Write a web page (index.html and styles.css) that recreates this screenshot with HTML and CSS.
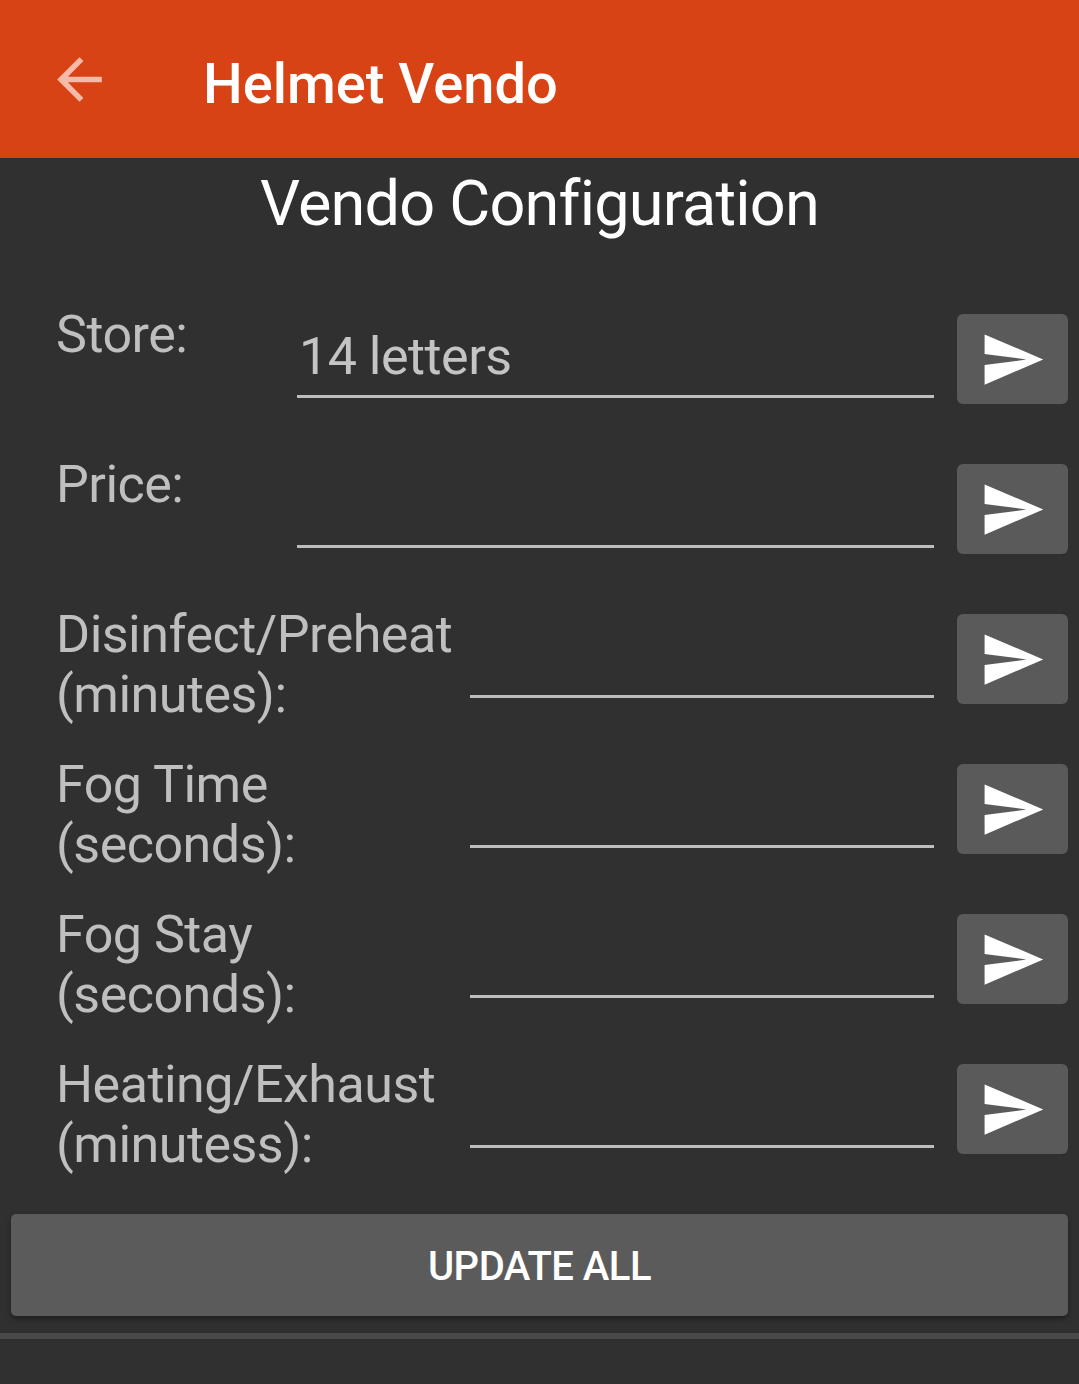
FILE: index.html
```html
<!DOCTYPE html>
<html>
<head>
<meta charset="utf-8">
<link rel="stylesheet" href="styles.css">
</head>
<body>
<header class="appbar">
  <svg class="back" width="67" height="67" viewBox="0 0 24 24">
    <path d="M20 11H7.83l5.59-5.59L12 4l-8 8 8 8 1.41-1.41L7.83 13H20v-2z" fill="#f6bba8"/>
  </svg>
  <h1 class="appbar-title">Helmet Vendo</h1>
</header>
<main class="content">
  <h2 class="page-title">Vendo Configuration</h2>
  <div class="row">
    <div class="label label-short">Store:</div>
    <div class="field">14 letters</div>
    <button class="send"><svg viewBox="0 0 24 24" width="67" height="67"><path d="M2.01 21L23 12 2.01 3 2 10l15 2-15 2z" fill="#fff"/></svg></button>
  </div>
  <div class="row">
    <div class="label label-short">Price:</div>
    <div class="field"></div>
    <button class="send"><svg viewBox="0 0 24 24" width="67" height="67"><path d="M2.01 21L23 12 2.01 3 2 10l15 2-15 2z" fill="#fff"/></svg></button>
  </div>
  <div class="row">
    <div class="label label-long">Disinfect/Preheat<br>(minutes):</div>
    <div class="field"></div>
    <button class="send"><svg viewBox="0 0 24 24" width="67" height="67"><path d="M2.01 21L23 12 2.01 3 2 10l15 2-15 2z" fill="#fff"/></svg></button>
  </div>
  <div class="row">
    <div class="label label-long">Fog Time<br>(seconds):</div>
    <div class="field"></div>
    <button class="send"><svg viewBox="0 0 24 24" width="67" height="67"><path d="M2.01 21L23 12 2.01 3 2 10l15 2-15 2z" fill="#fff"/></svg></button>
  </div>
  <div class="row">
    <div class="label label-long">Fog Stay<br>(seconds):</div>
    <div class="field"></div>
    <button class="send"><svg viewBox="0 0 24 24" width="67" height="67"><path d="M2.01 21L23 12 2.01 3 2 10l15 2-15 2z" fill="#fff"/></svg></button>
  </div>
  <div class="row">
    <div class="label label-long">Heating/Exhaust<br>(minutess):</div>
    <div class="field"></div>
    <button class="send"><svg viewBox="0 0 24 24" width="67" height="67"><path d="M2.01 21L23 12 2.01 3 2 10l15 2-15 2z" fill="#fff"/></svg></button>
  </div>
  <button class="update">UPDATE ALL</button>
  <div class="divider"></div>
</main>
</body>
</html>
```
FILE: styles.css
```css
html, body {
  margin: 0;
  padding: 0;
  background: #303030;
  font-family: Roboto, "Liberation Sans", sans-serif;
}
body {
  width: 1079px;
  height: 1384px;
  overflow: hidden;
}
.appbar {
  height: 158px;
  background: #d84315;
  display: flex;
  align-items: center;
  box-sizing: border-box;
}
.back {
  flex: none;
  margin-left: 46px;
  margin-top: 1px;
}
.appbar-title {
  margin: 10px 0 0 90px;
  color: #fff;
  font-size: 56px;
  font-weight: 500;
  line-height: 64px;
}
.content {
  display: flex;
  flex-direction: column;
}
.page-title {
  margin: 6px 0 61px;
  text-align: center;
  color: #fff;
  font-weight: 400;
  font-size: 63px;
  letter-spacing: -0.8px;
  line-height: 80px;
}
.row {
  display: flex;
  align-items: flex-start;
  height: 150px;
  padding: 0 11px 0 56px;
}
.label {
  color: #bfbfbf;
  font-size: 52px;
  letter-spacing: -0.5px;
  line-height: 60px;
  flex: none;
}
.label-short { width: 241px; }
.label-long { width: 414px; }
.field {
  flex: 1;
  margin-top: 22px;
  height: 60px;
  padding: 0 0 8px 2px;
  border-bottom: 3px solid #bdbdbd;
  color: #c4c4c4;
  font-size: 52px;
  letter-spacing: -0.5px;
  line-height: 60px;
}
.send {
  flex: none;
  width: 111px;
  height: 90px;
  margin: 9px 0 0 23px;
  border: none;
  border-radius: 6px;
  background: #5a5a5b;
  display: flex;
  align-items: center;
  justify-content: center;
  padding: 0;
}
.update {
  margin: 9px 11px 0;
  height: 102px;
  border: none;
  border-radius: 5px;
  background: #5b5b5c;
  box-shadow: 0 3px 5px rgba(0,0,0,0.35);
  color: #fff;
  font-family: Roboto, "Liberation Sans", sans-serif;
  font-size: 40px;
  font-weight: 500;
  letter-spacing: -0.5px;
  padding-top: 4px;
}
.divider {
  margin-top: 17px;
  height: 6px;
  background: #494949;
}
```
